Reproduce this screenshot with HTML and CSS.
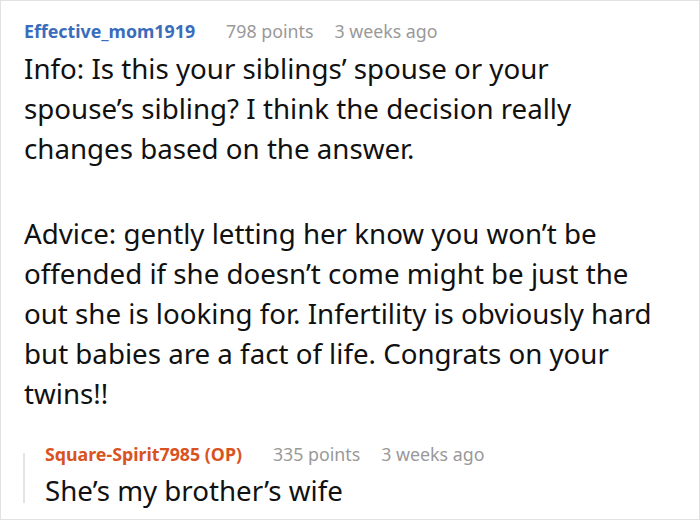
FILE: index.html
```html
<!DOCTYPE html>
<html>
<head>
<meta charset="utf-8">
<link rel="stylesheet" href="styles.css">
</head>
<body>
<div class="frame">
  <div class="comment">
    <div class="meta">
      <span class="user">Effective_mom1919</span>
      <span class="info">798 points</span>
      <span class="info">3 weeks ago</span>
    </div>
    <div class="body">
      <p>Info: Is this your siblings’ spouse or your spouse’s sibling? I think the decision really changes based on the answer.</p>
      <p>Advice: gently letting her know you won’t be offended if she doesn’t come might be just the out she is looking for. Infertility is obviously hard but babies are a fact of life. Congrats on your twins!!</p>
    </div>
    <div class="reply">
      <div class="bar"></div>
      <div class="reply-content">
        <div class="meta">
          <span class="user op">Square-Spirit7985 (OP)</span>
          <span class="info">335 points</span>
          <span class="info">3 weeks ago</span>
        </div>
        <div class="body">
          <p>She’s my brother’s wife</p>
        </div>
      </div>
    </div>
  </div>
</div>
</body>
</html>
```
FILE: styles.css
```css
html, body {
  margin: 0;
  padding: 0;
  background: #fff;
}
.frame {
  width: 698px;
  height: 518px;
  border: 1px solid #e2e2e2;
  overflow: hidden;
  font-family: "Noto Sans", sans-serif;
  color: #111;
}
.comment {
  padding: 18px 0 0 23px;
}
.meta {
  display: flex;
  font-size: 17.8px;
  line-height: 24px;
}
.user {
  font-weight: bold;
  color: #3a6cbc;
  margin-right: 31px;
}
.user.op {
  color: #d9531f;
}
.info {
  color: #999;
  margin-right: 21px;
}
.body {
  font-size: 27.7px;
  line-height: 40px;
  width: 638px;
}
.body p {
  margin: 5px 0 0;
}
.body p + p {
  margin-top: 45px;
}
.reply {
  display: flex;
  margin-top: 29px;
  margin-left: -1px;
}
.bar {
  width: 2px;
  background: #e4e4e4;
  margin: 11px 0 7px;
  flex: none;
}
.reply-content {
  padding-left: 20px;
}
.reply .meta {
  margin-bottom: 4px;
}
.reply .body p {
  margin-top: 0;
}
```
